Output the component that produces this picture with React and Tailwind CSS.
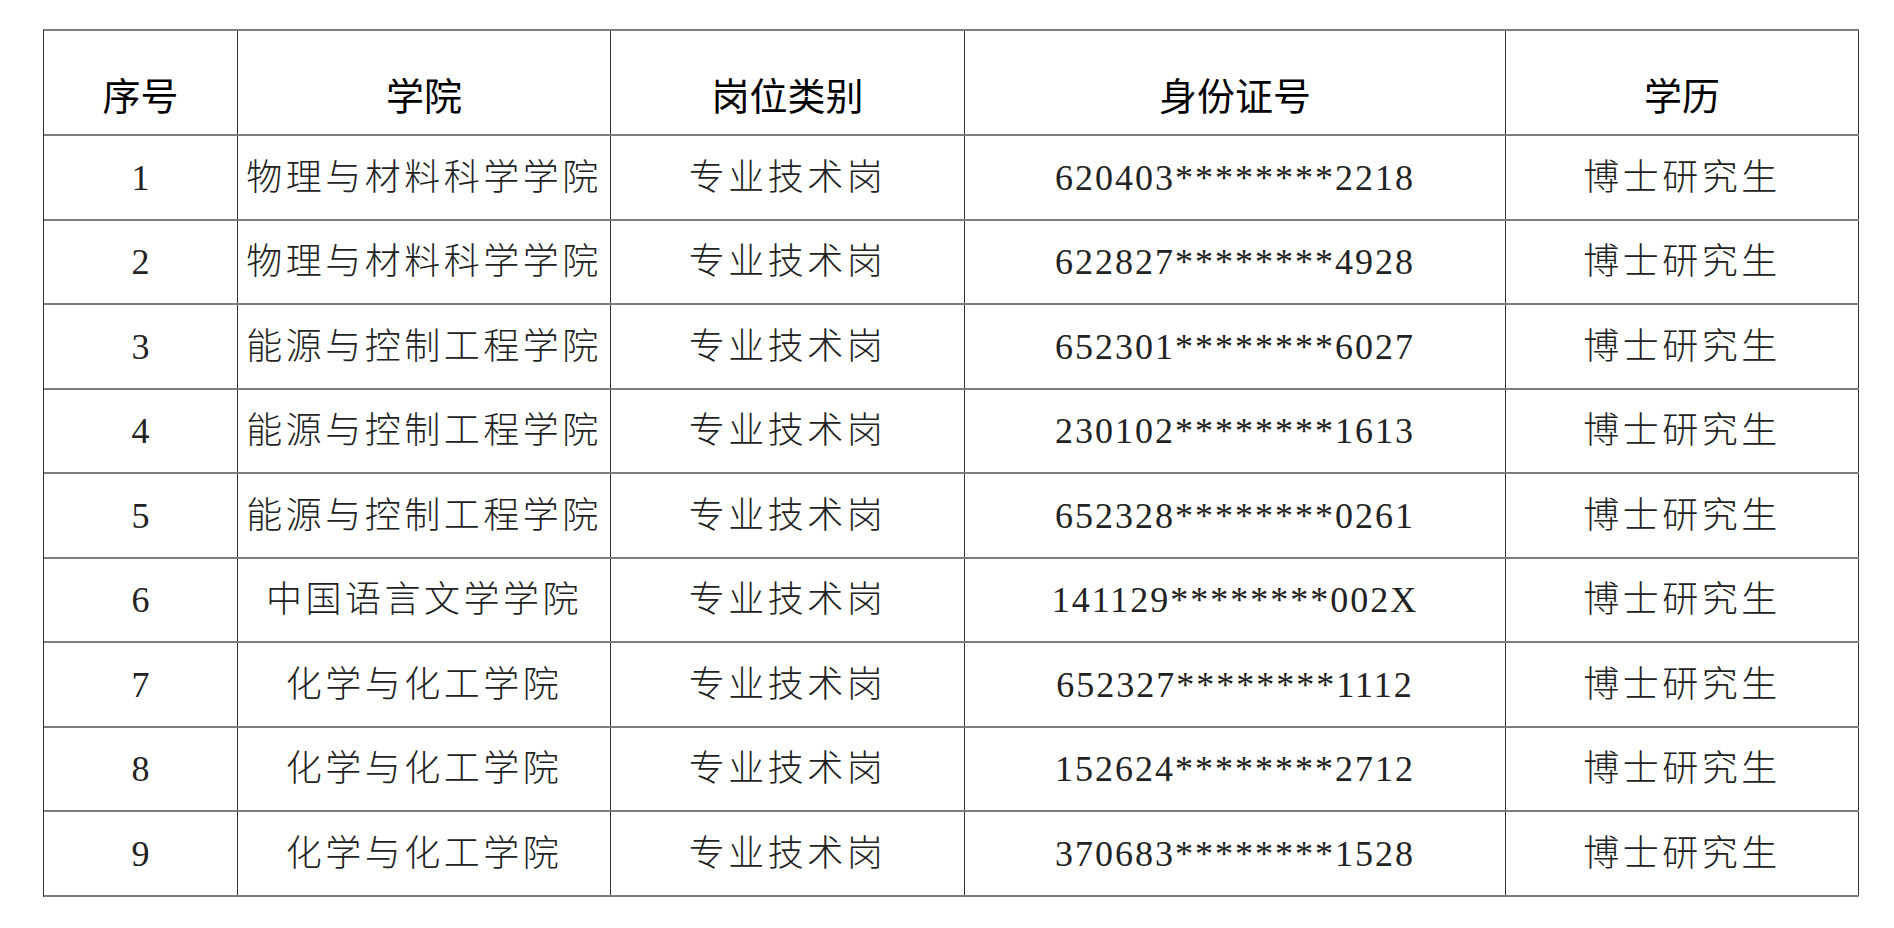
import React from "react";

const headers = ["序号", "学院", "岗位类别", "身份证号", "学历"];

// recruitment list rows
const rows = [
  ["1", "物理与材料科学学院", "专业技术岗", "620403********2218", "博士研究生"],
  ["2", "物理与材料科学学院", "专业技术岗", "622827********4928", "博士研究生"],
  ["3", "能源与控制工程学院", "专业技术岗", "652301********6027", "博士研究生"],
  ["4", "能源与控制工程学院", "专业技术岗", "230102********1613", "博士研究生"],
  ["5", "能源与控制工程学院", "专业技术岗", "652328********0261", "博士研究生"],
  ["6", "中国语言文学学院", "专业技术岗", "141129********002X", "博士研究生"],
  ["7", "化学与化工学院", "专业技术岗", "652327********1112", "博士研究生"],
  ["8", "化学与化工学院", "专业技术岗", "152624********2712", "博士研究生"],
  ["9", "化学与化工学院", "专业技术岗", "370683********1528", "博士研究生"],
];

const cols = "grid grid-cols-[194px_373px_354px_541px_353px]";
const cell = "flex items-center justify-center border-r border-[#333]";
const cjk = `${cell} text-[36px] font-light tracking-[3.5px] leading-none text-[#222]`;

const App = () => {
  return (
    <div
      className="w-[1894px] h-[928px] bg-white pt-[29px] pl-[43px]"
      style={{ fontFamily: '"Liberation Serif", "Noto Sans CJK SC", serif' }}
    >
      <div className="w-[1816px] border-t-2 border-l border-t-[#7d7d7d] border-l-[#333]">
        {/* Header */}
        <div className={`${cols} h-[105px] border-b-2 border-[#7d7d7d]`}>
          {headers.map((h) => (
            <div
              key={h}
              className={`${cell} pt-7 text-[38px] leading-none text-black`}
            >
              {h}
            </div>
          ))}
        </div>

        {/* Body */}
        {rows.map((r, i) => (
          <div
            key={r[0]}
            className={`${cols} ${
              i % 2 === 0 ? "h-[85px]" : "h-[84px]"
            } border-b-2 border-[#7d7d7d]`}
          >
            <div className={`${cell} text-[36px] leading-none text-[#222]`}>
              {r[0]}
            </div>
            <div className={cjk}>{r[1]}</div>
            <div className={cjk}>{r[2]}</div>
            <div
              className={`${cell} text-[36px] tracking-[2px] leading-none text-[#222]`}
            >
              {r[3]}
            </div>
            <div className={cjk}>{r[4]}</div>
          </div>
        ))}
      </div>
    </div>
  );
};

export default App;
